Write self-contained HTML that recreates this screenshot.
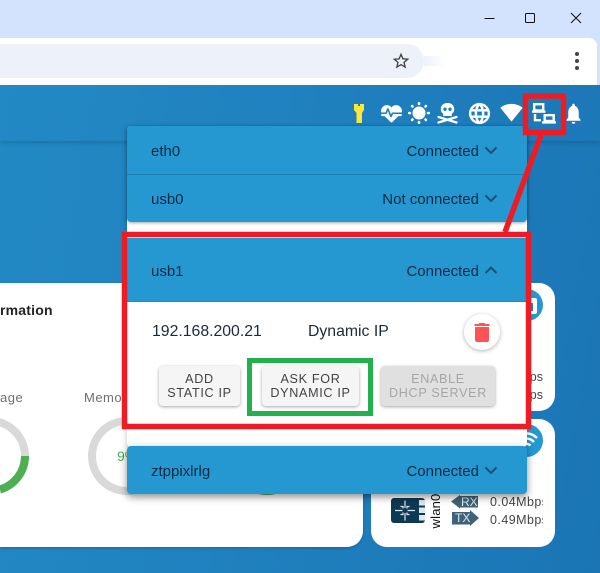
<!DOCTYPE html>
<html><head><meta charset="utf-8"><style>
html,body{margin:0;padding:0}
body{width:600px;height:573px;position:relative;overflow:hidden;background:#d3e3fd;font-family:"Liberation Sans",sans-serif;color:#0e2b45}
div,span,svg{position:absolute}
svg{display:block}
.t{font-size:15px;white-space:nowrap;line-height:18px}
.r{right:121px;text-align:right}
.btn{top:366px;height:40px;border-radius:4px;background:#f5f5f5;box-shadow:0 1px 3px rgba(0,0,0,.35);color:#444;font-size:12.6px;letter-spacing:.68px;line-height:14px;text-align:center;padding-top:6px;box-sizing:border-box}
.card{background:#fff}
.bar{left:127px;width:400px;background:#2698d1}
</style></head><body>
<!-- browser -->
<div style="left:0;top:38px;width:597px;height:47px;background:#fff;border-top-right-radius:8px"></div>
<div style="left:0;top:44px;width:424px;height:34px;background:#edf2fa;border-radius:0 17px 17px 0"></div>
<div style="left:424px;top:56px;width:22px;height:10px;background:linear-gradient(90deg,#edf2fa,#fff)"></div>
<svg style="left:391px;top:51px" width="20" height="20" viewBox="0 0 24 24" fill="#444"><path d="M22 9.24l-7.19-.62L12 2 9.19 8.63 2 9.24l5.46 4.73L5.82 21 12 17.27 18.18 21l-1.63-7.03L22 9.24zM12 15.4l-3.76 2.27 1-4.28-3.32-2.88 4.38-.38L12 6.1l1.71 4.04 4.38.38-3.32 2.88 1 4.28L12 15.4z"/></svg>
<div style="left:575px;top:52px;width:4px;height:4px;border-radius:2px;background:#444"></div>
<div style="left:575px;top:59px;width:4px;height:4px;border-radius:2px;background:#444"></div>
<div style="left:575px;top:66px;width:4px;height:4px;border-radius:2px;background:#444"></div>
<svg style="left:480px;top:10px" width="105" height="16" fill="none" stroke="#111" stroke-width="1"><path d="M4.5 8.5H14.5"/><rect x="45.5" y="3.5" width="9" height="9" rx="1"/><path d="M91 3L101 13M101 3L91 13"/></svg>

<!-- page -->
<div style="left:0;top:85px;width:600px;height:488px;background:linear-gradient(100deg,#2289c4 0%,#2082c0 40%,#1b75b5 100%)"></div>
<div style="left:0;top:85px;width:600px;height:56px;box-shadow:0 2px 4px rgba(0,0,0,.16)"></div>

<!-- icons -->
<svg style="left:350px;top:100px" width="240" height="28">
<path d="M4 4H8V6H10V4H14V10L12 13V23H6.500V13L4 10Z" fill="#ffe835"/>
<circle cx="69" cy="13" r="6.500" fill="#fff"/>
<g stroke="#fff" stroke-width="2.600" stroke-linecap="round">
<path d="M69 3.300V3.900M69 22.100V22.700M59.300 13H59.900M78.100 13H78.700M62.100 6.100L62.500 6.500M75.500 19.500L75.900 19.900M62.100 19.900L62.500 19.500M75.500 6.500L75.900 6.100"/>
</g>
<path d="M97.500 3C92.800 3 90.800 6 90.800 9.200C90.800 11.300 91.800 12.900 93.200 13.800V16H101.800V13.800C103.200 12.900 104.200 11.300 104.200 9.200C104.200 6 102.200 3 97.500 3Z" fill="#fff"/>
<circle cx="95" cy="9.200" r="1.700" fill="#1d7cba"/><circle cx="100" cy="9.200" r="1.700" fill="#1d7cba"/>
<path d="M88.500 17L106.500 22.500M106.500 17L88.500 22.500" stroke="#fff" stroke-width="2.300" stroke-linecap="round"/>
</svg>
<svg style="left:379px;top:101px" width="25" height="25" viewBox="0 0 24 24" fill="#fff"><path d="M7.5,4A5.5,5.5 0 0,0 2,9.5C2,10 2.09,10.5 2.22,11H6.3L7.57,7.63C7.87,6.83 9.05,6.75 9.43,7.63L11.5,13L12.09,11.58C12.22,11.25 12.57,11 13,11H21.78C21.91,10.5 22,10 22,9.5A5.5,5.5 0 0,0 16.5,4C14.64,4 13,4.93 12,6.34C11,4.93 9.36,4 7.5,4M3,12.5A1,1 0 0,0 2,13.5A1,1 0 0,0 3,14.5H5.44L11,20C12,20.9 12,20.9 13,20L18.56,14.5H21A1,1 0 0,0 22,13.5A1,1 0 0,0 21,12.5H13.4L12.47,14.8C12.07,15.81 10.92,15.67 10.55,14.83L8.5,9.5L7.54,11.83C7.39,12.21 7.05,12.5 6.6,12.5H3Z"/></svg>
<svg style="left:466.500px;top:100.500px" width="25" height="25" viewBox="0 0 24 24" fill="#fff" stroke="#fff" stroke-width=".35"><path d="M11.99 2C6.47 2 2 6.48 2 12s4.47 10 9.99 10C17.52 22 22 17.52 22 12S17.52 2 11.99 2zm6.93 6h-2.95c-.32-1.25-.78-2.45-1.38-3.56 1.84.63 3.37 1.91 4.33 3.56zM12 4.04c.83 1.2 1.48 2.53 1.91 3.96h-3.82c.43-1.43 1.08-2.76 1.91-3.96zM4.26 14C4.1 13.36 4 12.69 4 12s.1-1.36.26-2h3.38c-.08.66-.14 1.32-.14 2 0 .68.06 1.34.14 2H4.26zm.82 2h2.95c.32 1.25.78 2.45 1.38 3.56-1.84-.63-3.37-1.9-4.33-3.56zm2.95-8H5.08c.96-1.66 2.49-2.93 4.33-3.56C8.81 5.55 8.35 6.75 8.03 8zM12 19.96c-.83-1.2-1.48-2.53-1.91-3.96h3.82c-.43 1.43-1.08 2.76-1.91 3.96zM14.34 14H9.66c-.09-.66-.16-1.32-.16-2 0-.68.07-1.35.16-2h4.68c.09.65.16 1.32.16 2 0 .68-.07 1.34-.16 2zm.25 5.56c.6-1.11 1.06-2.31 1.38-3.56h2.95c-.96 1.65-2.49 2.93-4.33 3.56zM16.36 14c.08-.66.14-1.32.14-2 0-.68-.06-1.34-.14-2h3.38c.16.64.26 1.31.26 2s-.1 1.36-.26 2h-3.38z"/></svg>
<svg style="left:499.500px;top:101px" width="23" height="23" viewBox="0 0 24 24" fill="#fff"><path d="M12.01 21.49L23.64 7c-.45-.34-4.93-4-11.64-4C5.28 3 .81 6.66.36 7l11.64 14.49.01.01.01-.01z"/></svg>
<svg style="left:530px;top:100px" width="28" height="26" fill="none" stroke="#fff" stroke-width="2.400"><rect x="4.200" y="4.200" width="9" height="6.300"/><path d="M2 11.600H15.500"/><rect x="14.700" y="15.200" width="9" height="5.800"/><path d="M12 22.400H26M5 14V20.200H11"/></svg>
<svg style="left:562.500px;top:100.500px" width="21" height="25" viewBox="0 0 24 24" preserveAspectRatio="none" fill="#fff"><path d="M12 22c1.1 0 2-.9 2-2h-4c0 1.1.89 2 2 2zm6-6v-5c0-3.07-1.64-5.64-4.500-6.320V4c0-.83-.67-1.500-1.500-1.500s-1.500.67-1.500 1.500v.68C7.630 5.360 6 7.920 6 11v5l-2 2v1h16v-1l-2-2z"/></svg>

<!-- cards -->
<div class="card" style="left:0;top:283px;width:363px;height:264px;border-radius:0 16px 16px 0;box-shadow:0 1px 3px rgba(0,0,0,.2)"></div>
<div class="card" style="left:371px;top:283px;width:184px;height:128px;border-radius:16px"></div>
<div class="card" style="left:371px;top:419px;width:184px;height:128px;border-radius:16px"></div>
<div style="left:0;top:302px;width:52px;text-align:right;font-size:14px;font-weight:bold;color:#222;white-space:nowrap;line-height:16px;letter-spacing:.2px">rmation</div>
<div style="left:0;top:391px;font-size:13px;color:#6e6e6e;white-space:nowrap;line-height:14px;letter-spacing:.5px">age</div>
<div style="left:84px;top:391px;font-size:13px;color:#6e6e6e;white-space:nowrap;line-height:14px;letter-spacing:.5px">Memory</div>
<svg style="left:0;top:410px" width="320" height="95" fill="none" stroke-width="8">
<circle cx="-10" cy="46" r="35" stroke="#d9d9d9"/>
<path d="M25 46A35 35 0 0 1 0 79.500" stroke="#4caf50"/>
<circle cx="127" cy="46" r="35" stroke="#d9d9d9"/>
<circle cx="267" cy="46" r="35" stroke="#4caf50"/>
</svg>
<div style="left:117px;top:448px;font-size:14px;color:#4caf50;line-height:16px">9%</div>

<div style="left:511px;top:289px;width:32px;height:32px;border-radius:16px;background:#2698d1"></div>
<div style="left:522px;top:298px;width:15px;height:16px;border-radius:2px;background:#fff"></div>
<div style="left:524px;top:303px;width:9px;height:8px;background:#1e84bd"></div>
<div style="left:509px;top:370px;width:34px;height:34px;overflow:hidden"><span style="right:0;top:0;font-size:12.500px;color:#444;line-height:14px;white-space:nowrap">Mbps</span><span style="right:0;top:18px;font-size:12.500px;color:#444;line-height:14px;white-space:nowrap">Mbps</span></div>
<div style="left:510px;top:424px;width:33px;height:33px;border-radius:17px;background:#2698d1"></div>
<svg style="left:514px;top:429px" width="26" height="24" viewBox="0 0 24 24" fill="none" stroke="#fff" stroke-width="2.400"><path d="M2 9C8 3 16 3 22 9M5 13C9.500 8.500 14.500 8.500 19 13M8.500 16.500C10.500 14.500 13.500 14.500 15.500 16.500"/></svg>

<!-- wlan row -->
<div style="left:391px;top:498px;width:34px;height:25px;border-radius:3px;background:#0c3954"></div>
<svg style="left:391px;top:497px" width="34" height="27" fill="none" stroke="#dce6ec" stroke-width="1.200"><path d="M4 13.500H11.500M16.500 13.500H24M14 3.500V11M14 16V23.500M9.500 9.500H12V11.500M18.500 9.500H16V11.500M9.500 17.500H12V15.500M18.500 17.500H16V15.500"/><rect x="28" y="3" width="6" height="5.500" fill="#dce6ec" stroke="none"/><rect x="28" y="10.500" width="6" height="5.500" fill="#dce6ec" stroke="none"/><rect x="28" y="18" width="6" height="5.500" fill="#dce6ec" stroke="none"/></svg>
<div style="left:416px;top:503px;width:40px;height:16px;transform:rotate(-90deg);font-size:13px;line-height:16px;color:#111;text-align:center;letter-spacing:.2px">wlan0</div>
<svg style="left:450px;top:494px" width="30" height="34"><path d="M1 7.500L10 1V2H28V13.500H10V14.500Z" fill="#3e6278"/><path d="M2 18H20V16L29 24L20 32V30.500H2Z" fill="#3e6278"/></svg>
<div style="left:461px;top:494.500px;font-size:12px;line-height:14px;color:#dfe7ec">RX</div>
<div style="left:455px;top:517px;font-size:12px;line-height:14px;color:#dfe7ec;margin-top:-6px">TX</div>
<div style="left:490px;top:494px;width:53px;height:36px;overflow:hidden;font-size:12.500px;color:#444;line-height:17.500px;white-space:nowrap;letter-spacing:.45px">0.04Mbps<br>0.49Mbps</div>

<!-- popover -->
<div style="left:127px;top:126px;width:400px;height:321px;background:#fff;box-shadow:0 2px 6px rgba(0,0,0,.25);border-radius:4px"></div>
<div class="bar" style="top:126px;height:96px;border-radius:4px;box-shadow:0 1px 3px rgba(0,0,0,.35)"></div>
<div class="bar" style="top:174px;height:1px;background:#1f80b5"></div>
<div class="t" style="left:151px;top:142.500px">eth0</div>
<div class="t" style="left:151px;top:190.500px">usb0</div>
<div class="t r" style="top:142.500px">Connected</div>
<div class="t r" style="top:190.500px">Not connected</div>

<div class="bar" style="top:238px;height:64px"></div>
<div style="left:127px;top:302px;width:400px;height:124px;background:#fff;box-shadow:0 1px 3px rgba(0,0,0,.35)"></div>
<div class="t" style="left:151px;top:262.500px">usb1</div>
<div class="t r" style="top:262.500px">Connected</div>
<div style="left:152px;top:323px;font-size:15.800px;line-height:18px;color:#1b2a3a;white-space:nowrap">192.168.200.21</div>
<div style="left:308px;top:323px;font-size:15.800px;line-height:18px;color:#1b2a3a;white-space:nowrap">Dynamic IP</div>
<div style="left:464px;top:314px;width:36px;height:36px;border-radius:18px;background:#fff;box-shadow:0 1px 4px rgba(0,0,0,.3)"></div>
<svg style="left:470px;top:320px" width="24" height="24" viewBox="0 0 24 24" fill="#ff5252"><path d="M5 20c0 1.100.9 2 2 2h10c1.100 0 2-.9 2-2V7H5v13zM19.500 4h-4l-1-1h-5l-1 1h-4v2h15V4z"/></svg>
<div class="btn" style="left:159px;width:81px">ADD<br>STATIC IP</div>
<div class="btn" style="left:262px;width:97px">ASK FOR<br>DYNAMIC IP</div>
<div class="btn" style="left:381px;width:114px;background:#e0e0e0;color:#a6a6a6">ENABLE<br>DHCP SERVER</div>

<div class="bar" style="top:446px;height:48px;border-radius:4px;box-shadow:0 3px 8px rgba(0,0,0,.45)"></div>
<div class="t" style="left:151px;top:462.500px">ztppixlrlg</div>
<div class="t r" style="top:462.500px">Connected</div>

<svg style="left:127px;top:126px" width="400" height="368" fill="none" stroke="#1d4f72" stroke-width="2">
<path d="M358.500 21.500L364 27L369.500 21.500M358.500 69.500L364 75L369.500 69.500M358.500 147L364 141.500L369.500 147M358.500 341.500L364 347L369.500 341.500"/>
</svg>

<!-- annotations -->
<svg style="left:0;top:0" width="600" height="573" fill="none" stroke="#ed1c24" stroke-width="5.500">
<rect x="525.500" y="96" width="38" height="36.500"/>
<path d="M541 135L505 232"/>
<rect x="124.500" y="234.500" width="404" height="192"/>
</svg>
<div style="left:247px;top:358px;width:126px;height:58px;box-sizing:border-box;border:5px solid #22b14c"></div>
</body></html>
